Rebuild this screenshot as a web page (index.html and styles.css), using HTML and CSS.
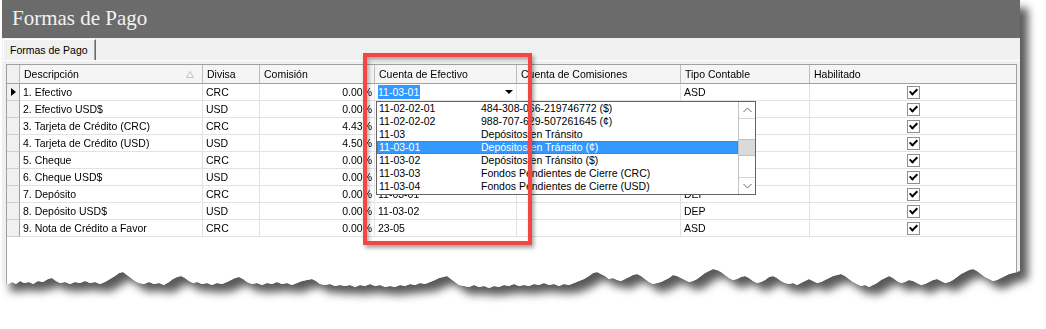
FILE: index.html
```html
<!DOCTYPE html>
<html lang="es">
<head>
    <meta charset="UTF-8">
    <title>Formas de Pago</title>
    <link rel="stylesheet" href="styles.css">
</head>
<body>
<div class="page">
    <div class="frame">
        <div class="window">
            <div class="titlebar">Formas de Pago</div>
            <div class="tabs"><div class="tab">Formas de Pago</div></div>
            <div class="panel">
                <div class="grid">
                    <div class="row head">
                        <div class="c rh"></div>
                        <div class="c sortable">Descripción
                            <svg class="sort" width="8" height="7" viewBox="0 0 8 7"><path d="M0.5 6.5 L4 0.5 L7.5 6.5 Z" fill="none" stroke="#c4c4c4"/></svg>
                        </div>
                        <div class="c">Divisa</div>
                        <div class="c">Comisión</div>
                        <div class="c">Cuenta de Efectivo</div>
                        <div class="c">Cuenta de Comisiones</div>
                        <div class="c">Tipo Contable</div>
                        <div class="c">Habilitado</div>
                    </div>

                    <div class="row">
                        <div class="c rh"><span class="cur"></span></div>
                        <div class="c">1. Efectivo</div>
                        <div class="c">CRC</div>
                        <div class="c num">0.00%</div>
                        <div class="c editor"><span class="sel">11-03-01</span><span class="drop"></span></div>
                        <div class="c"></div>
                        <div class="c">ASD</div>
                        <div class="c mid"><span class="chk"></span></div>
                    </div>
                    <div class="row">
                        <div class="c rh"></div>
                        <div class="c">2. Efectivo USD$</div>
                        <div class="c">USD</div>
                        <div class="c num">0.00%</div>
                        <div class="c"></div>
                        <div class="c"></div>
                        <div class="c"></div>
                        <div class="c mid"><span class="chk"></span></div>
                    </div>
                    <div class="row">
                        <div class="c rh"></div>
                        <div class="c">3. Tarjeta de Crédito (CRC)</div>
                        <div class="c">CRC</div>
                        <div class="c num">4.43%</div>
                        <div class="c"></div>
                        <div class="c"></div>
                        <div class="c"></div>
                        <div class="c mid"><span class="chk"></span></div>
                    </div>
                    <div class="row">
                        <div class="c rh"></div>
                        <div class="c">4. Tarjeta de Crédito (USD)</div>
                        <div class="c">USD</div>
                        <div class="c num">4.50%</div>
                        <div class="c"></div>
                        <div class="c"></div>
                        <div class="c"></div>
                        <div class="c mid"><span class="chk"></span></div>
                    </div>
                    <div class="row">
                        <div class="c rh"></div>
                        <div class="c">5. Cheque</div>
                        <div class="c">CRC</div>
                        <div class="c num">0.00%</div>
                        <div class="c"></div>
                        <div class="c"></div>
                        <div class="c"></div>
                        <div class="c mid"><span class="chk"></span></div>
                    </div>
                    <div class="row">
                        <div class="c rh"></div>
                        <div class="c">6. Cheque USD$</div>
                        <div class="c">USD</div>
                        <div class="c num">0.00%</div>
                        <div class="c"></div>
                        <div class="c"></div>
                        <div class="c"></div>
                        <div class="c mid"><span class="chk"></span></div>
                    </div>
                    <div class="row">
                        <div class="c rh"></div>
                        <div class="c">7. Depósito</div>
                        <div class="c">CRC</div>
                        <div class="c num">0.00%</div>
                        <div class="c">11-03-01</div>
                        <div class="c"></div>
                        <div class="c">DEP</div>
                        <div class="c mid"><span class="chk"></span></div>
                    </div>
                    <div class="row">
                        <div class="c rh"></div>
                        <div class="c">8. Depósito USD$</div>
                        <div class="c">USD</div>
                        <div class="c num">0.00%</div>
                        <div class="c">11-03-02</div>
                        <div class="c"></div>
                        <div class="c">DEP</div>
                        <div class="c mid"><span class="chk"></span></div>
                    </div>
                    <div class="row">
                        <div class="c rh"></div>
                        <div class="c">9. Nota de Crédito a Favor</div>
                        <div class="c">CRC</div>
                        <div class="c num">0.00%</div>
                        <div class="c">23-05</div>
                        <div class="c"></div>
                        <div class="c">ASD</div>
                        <div class="c mid"><span class="chk"></span></div>
                    </div>

                    <div class="combo-list">
                        <div class="opts">
                            <div class="opt"><span>11-02-02-01</span><span>484-308-066-219746772 ($)</span></div>
                            <div class="opt"><span>11-02-02-02</span><span>988-707-629-507261645 (¢)</span></div>
                            <div class="opt"><span>11-03</span><span>Depósitos en Tránsito</span></div>
                            <div class="opt on"><span>11-03-01</span><span>Depósitos en Tránsito (¢)</span></div>
                            <div class="opt"><span>11-03-02</span><span>Depósitos en Tránsito ($)</span></div>
                            <div class="opt"><span>11-03-03</span><span>Fondos Pendientes de Cierre (CRC)</span></div>
                            <div class="opt"><span>11-03-04</span><span>Fondos Pendientes de Cierre (USD)</span></div>
                        </div>
                        <div class="sb">
                            <div class="sb-btn up">
                                <svg width="9" height="6" viewBox="0 0 9 6"><polyline points="0.5,5 4.5,1 8.5,5" fill="none" stroke="#6a6a6a"/></svg>
                            </div>
                            <div class="sb-track"><div class="thumb"></div></div>
                            <div class="sb-btn down">
                                <svg width="9" height="6" viewBox="0 0 9 6"><polyline points="0.5,1 4.5,5 8.5,1" fill="none" stroke="#6a6a6a"/></svg>
                            </div>
                        </div>
                    </div>
                </div>
            </div>
        </div>
    </div>
    <div class="callout"></div>
</div>
</body>
</html>
```

FILE: styles.css
```css
body{
    margin: 0;
    background: #fff;
    font-family: "Liberation Sans", Arial, sans-serif;
    font-size: 10.5px;
    color: #000;
}

.page{
    position: relative;
    width: 1046px;
    height: 329px;
    overflow: hidden;
}

/* shadow follows the torn bottom edge of the window */
.frame{
    width: 1018px;
    margin-left: 2px;
    filter: drop-shadow(8px 8px 4px rgba(0, 0, 0, 0.65));
}

.window{
    height: 292px;
    background: #f0f0f0;
    display: flex;
    flex-direction: column;
    clip-path: polygon(0 0, 0 283px,
        6px 284px, 10px 282px, 14px 284px, 18px 281px, 22px 283px, 27px 282px, 31px 284px, 36px 281px,
        41px 282px, 46px 279px, 50px 278px, 54px 281px, 58px 283px, 63px 282px, 68px 284px, 73px 282px,
        78px 283px, 83px 281px, 88px 283px, 93px 282px, 98px 284px, 103px 282px, 108px 279px, 113px 276px,
        117px 273px, 121px 272px, 125px 275px, 129px 278px, 133px 281px, 137px 283px, 142px 284px, 147px 282px,
        152px 284px, 157px 283px, 162px 285px, 167px 282px, 171px 279px, 175px 277px, 179px 276px, 183px 278px,
        187px 281px, 191px 283px, 195px 282px, 200px 284px, 205px 283px, 210px 285px, 215px 283px, 220px 284px,
        225px 282px, 229px 280px, 233px 278px, 237px 277px, 241px 279px, 245px 282px, 250px 284px, 255px 283px,
        260px 285px, 265px 283px, 270px 284px, 275px 282px, 280px 284px, 285px 283px, 290px 285px, 295px 283px,
        300px 281px, 305px 280px, 310px 279px, 314px 281px, 318px 284px, 323px 285px, 328px 284px, 333px 286px,
        338px 285px, 343px 286px, 348px 285px, 353px 287px, 358px 285px, 363px 286px, 368px 284px, 373px 286px,
        378px 285px, 383px 287px, 388px 286px, 393px 287px, 398px 285px, 403px 286px, 408px 284px, 413px 285px,
        418px 283px, 423px 284px, 428px 282px, 433px 280px, 437px 278px, 441px 277px, 445px 276px, 449px 279px,
        453px 282px, 457px 285px, 462px 286px, 467px 287px, 472px 285px, 477px 287px, 482px 286px, 487px 288px,
        492px 286px, 497px 287px, 502px 285px, 507px 286px, 512px 284px, 517px 286px, 522px 285px, 527px 286px,
        532px 284px, 537px 285px, 542px 283px, 547px 285px, 552px 284px, 557px 286px, 562px 284px, 567px 285px,
        572px 283px, 577px 281px, 582px 279px, 587px 276px, 591px 273px, 595px 272px, 599px 274px, 603px 276px,
        607px 279px, 611px 278px, 615px 280px, 619px 281px, 623px 279px, 627px 277px, 631px 275px, 635px 274px,
        639px 276px, 643px 279px, 647px 282px, 651px 284px, 655px 283px, 659px 282px, 663px 280px, 667px 278px,
        671px 275px, 675px 276px, 679px 278px, 683px 280px, 687px 282px, 691px 281px, 695px 279px, 699px 276px,
        703px 273px, 707px 271px, 711px 269px, 715px 270px, 719px 272px, 723px 275px, 727px 278px, 731px 280px,
        735px 279px, 739px 277px, 743px 276px, 747px 278px, 751px 281px, 755px 283px, 759px 282px, 763px 280px,
        767px 277px, 771px 276px, 775px 278px, 779px 281px, 783px 283px, 787px 284px, 791px 283px, 795px 285px,
        799px 283px, 803px 281px, 807px 279px, 811px 281px, 815px 283px, 819px 282px, 823px 280px, 827px 278px,
        831px 276px, 835px 275px, 839px 274px, 843px 276px, 847px 279px, 851px 282px, 855px 284px, 859px 286px,
        863px 285px, 867px 287px, 871px 285px, 875px 283px, 879px 280px, 883px 278px, 887px 276px, 891px 278px,
        895px 281px, 899px 283px, 903px 282px, 907px 280px, 911px 281px, 915px 283px, 919px 285px, 923px 284px,
        927px 282px, 931px 280px, 935px 279px, 939px 281px, 943px 283px, 947px 282px, 951px 280px, 955px 277px,
        959px 274px, 963px 272px, 967px 270px, 971px 269px, 975px 271px, 979px 274px, 983px 277px, 987px 279px,
        991px 281px, 995px 280px, 999px 278px, 1003px 276px, 1007px 274px, 1011px 273px, 1015px 272px,
        1018px 271px, 1018px 0);
}

.titlebar{
    height: 38px;
    flex: none;
    background: #6b6b6b;
    color: #f2f2f2;
    font-family: "Liberation Serif", "Times New Roman", serif;
    font-size: 21px;
    line-height: 36px;
    padding-left: 10px;
}

.tabs{
    height: 22px;
    flex: none;
    display: flex;
    align-items: flex-end;
    padding-left: 1px;
}

.tab{
    height: 20px;
    line-height: 20px;
    padding: 0 7px 0 6px;
    border-top: 1px solid #fff;
    border-left: 1px solid #fff;
    border-right: 1px solid #696969;
    box-shadow: inset -1px 0 0 #a0a0a0;
}

.panel{
    flex: 1;
    display: flex;
    border-top: 1px solid #fff;
    padding: 3px 3px 0 4px;
}

.grid{
    flex: 1;
    position: relative;
    background: #fff;
    border: 1px solid #a0a0a0;
}

.row{
    display: grid;
    grid-template-columns: 13px 183px 57px 115px 142px 164px 129px 1fr;
    height: 17px;
}

.c{
    border-right: 1px solid #e2e2e2;
    border-bottom: 1px solid #e2e2e2;
    padding-left: 3px;
    line-height: 16px;
    white-space: nowrap;
    overflow: hidden;
}
.c:last-child{
    border-right: none;
}

.head{
    height: 19px;
    background: #f5f5f5;
}
.head .c{
    border-bottom: 1px solid #a0a0a0;
    border-right-color: #bcbcbc;
    padding-left: 4px;
    line-height: 18px;
}
.sortable{
    display: flex;
    align-items: center;
    justify-content: space-between;
    padding-right: 8px;
}

.rh{
    padding: 0;
    background: #f0f0f0;
    border-right-color: #a0a0a0;
    border-bottom-color: #cfcfcf;
}
.head .rh{
    padding: 0;
}

.cur{
    display: block;
    width: 0;
    height: 0;
    margin: 4px 0 0 4px;
    border-left: 5px solid #000;
    border-top: 4px solid transparent;
    border-bottom: 4px solid transparent;
}

.num{
    text-align: right;
    padding-right: 2px;
}

.mid{
    display: flex;
    align-items: center;
    justify-content: center;
    padding-left: 0;
}

.chk{
    position: relative;
    width: 13px;
    height: 13px;
    box-sizing: border-box;
    border: 1px solid #8e8f8f;
    background: #fff;
}
.chk::after{
    content: "";
    position: absolute;
    left: 3px;
    top: 0;
    width: 3px;
    height: 6px;
    border: solid #000;
    border-width: 0 2px 2px 0;
    transform: rotate(45deg);
}

.editor{
    display: flex;
    align-items: center;
    justify-content: space-between;
}
.sel{
    background: #3399ff;
    color: #fff;
    line-height: 14px;
    padding-right: 1px;
}
.drop{
    width: 0;
    height: 0;
    margin-right: 3px;
    border-left: 4px solid transparent;
    border-right: 4px solid transparent;
    border-top: 4px solid #000;
}

.combo-list{
    position: absolute;
    left: 369px;
    top: 36px;
    width: 380px;
    height: 94px;
    box-sizing: border-box;
    border: 1px solid #646464;
    background: #fff;
    display: flex;
    z-index: 2;
}
.opts{
    flex: 1;
}
.opt{
    display: grid;
    grid-template-columns: 102px 1fr;
    padding-left: 2px;
    height: 13px;
    line-height: 13px;
    white-space: nowrap;
}
.opt.on{
    background: #3399ff;
    color: #fff;
    outline: 1px dotted #9a6400;
    outline-offset: -1px;
}

.sb{
    width: 16px;
    border-left: 1px solid #c4c4c4;
    display: flex;
    flex-direction: column;
}
.sb-btn{
    height: 16px;
    display: flex;
    align-items: center;
    justify-content: center;
}
.sb-btn.up{
    border-bottom: 1px solid #d4d4d4;
}
.sb-btn.down{
    border-top: 1px solid #d4d4d4;
}
.sb-track{
    flex: 1;
    padding-top: 20px;
}
.thumb{
    height: 17px;
    box-sizing: border-box;
    background: #dadada;
    border-top: 1px solid #c2c2c2;
    border-bottom: 1px solid #c2c2c2;
}

.callout{
    position: absolute;
    left: 363px;
    top: 53px;
    width: 169px;
    height: 192px;
    box-sizing: border-box;
    border: 4px solid #f54646;
    box-shadow: 2px 3px 4px rgba(0, 0, 0, 0.35), inset 2px 3px 4px rgba(0, 0, 0, 0.3);
}
```
